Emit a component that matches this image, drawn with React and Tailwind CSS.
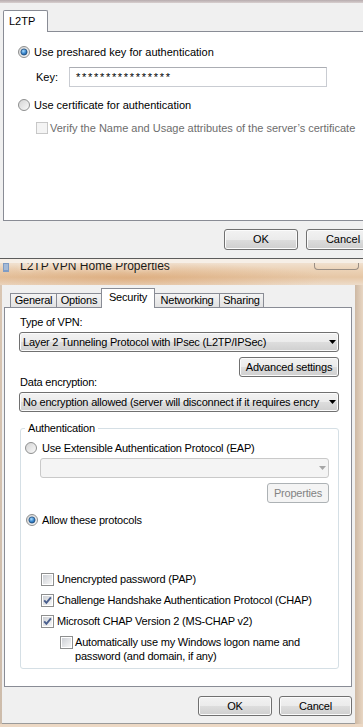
import React from "react";

const btn =
  "flex items-center justify-center shrink-0 border border-[#707070] rounded-[3px] bg-[linear-gradient(to_bottom,#f2f2f2_0%,#ebebeb_50%,#dddddd_51%,#cfcfcf_100%)] shadow-[inset_0_0_0_1px_#fbfbfb]";
const btnOff =
  "flex items-center justify-center shrink-0 border border-[#adb2b5] rounded-[3px] bg-[#f4f4f4] text-[#838383]";

function Radio({ checked }) {
  return (
    <svg width="12" height="12" viewBox="0 0 12 12" className="shrink-0">
      <defs>
        <linearGradient id="rg" x1="0" y1="0" x2="1" y2="1">
          <stop offset="0" stopColor="#d2d2d2" />
          <stop offset="1" stopColor="#fbfbfb" />
        </linearGradient>
        <radialGradient id="rd" cx="0.4" cy="0.35" r="0.75">
          <stop offset="0" stopColor="#a9dcff" />
          <stop offset="0.55" stopColor="#3a86cc" />
          <stop offset="1" stopColor="#174a86" />
        </radialGradient>
      </defs>
      <circle cx="6" cy="6" r="5.5" fill="url(#rg)" stroke="#8e8f8f" />
      {checked && (
        <circle cx="6" cy="6" r="3.1" fill="url(#rd)" stroke="#24527f" strokeWidth="0.8" />
      )}
    </svg>
  );
}

function Check({ checked, disabled, size = 13 }) {
  return (
    <svg width={size} height={size} viewBox="0 0 13 13" className="shrink-0">
      <defs>
        <linearGradient id="cg" x1="0" y1="0" x2="1" y2="1">
          <stop offset="0" stopColor="#cdd0d5" />
          <stop offset="1" stopColor="#f7f7f7" />
        </linearGradient>
      </defs>
      <rect
        x="0.5"
        y="0.5"
        width="12"
        height="12"
        fill={disabled ? "#f4f4f4" : "#ffffff"}
        stroke={disabled ? "#c4c4c4" : "#8e8f8f"}
      />
      {!disabled && <rect x="2" y="2" width="9" height="9" fill="url(#cg)" />}
      {checked && (
        <path d="M3.2 6.4 L5.4 8.9 L9.9 3.4" fill="none" stroke="#4a5f8e" strokeWidth="1.9" />
      )}
    </svg>
  );
}

function Arrow({ color = "#000" }) {
  return (
    <svg width="7" height="4" viewBox="0 0 7 4" className="shrink-0">
      <path d="M0 0 H7 L3.5 4 Z" fill={color} />
    </svg>
  );
}

function Combo({ text, disabled, className = "" }) {
  return (
    <div
      className={`h-[20px] flex items-center pl-[3px] pr-[2px] rounded-[3px] border ${
        disabled
          ? "border-[#c9c9c9] bg-[#f4f4f4]"
          : "border-[#707070] bg-[linear-gradient(to_bottom,#f2f2f2_0%,#ebebeb_50%,#dddddd_51%,#cfcfcf_100%)] shadow-[inset_0_0_0_1px_#fbfbfb]"
      } ${className}`}
    >
      <span className="flex-1 whitespace-nowrap overflow-hidden">{text}</span>
      <Arrow color={disabled ? "#a6a6a6" : "#000"} />
    </div>
  );
}

const App = () => {
  return (
    <div className="w-[363px] h-[727px] overflow-hidden bg-[#f0f0f0] flex flex-col font-['Liberation_Sans',Arial,sans-serif] text-[11px] text-black">
      {/* L2TP advanced properties (top, cropped) */}
      <div className="h-[259px] shrink-0 flex flex-col border-b border-[#5c5c5c]">
        <div className="h-[3px] bg-[linear-gradient(to_bottom,#b7acae,#d8cfcf)]" />
        <div className="pt-[7px] pl-[3px] flex">
          <div className="relative z-10 -mb-px w-[45px] h-[22px] bg-white border border-b-0 border-[#898c95] rounded-t-[2px] pl-[5px] flex items-center">
            L2TP
          </div>
        </div>
        <div className="ml-[3px] w-[420px] h-[190px] shrink-0 bg-white border border-[#898c95] flex flex-col">
          <div className="mt-[13px] ml-[14px] h-[14px] flex items-center gap-[4px]">
            <Radio checked />
            <span>Use preshared key for authentication</span>
          </div>
          <div className="mt-[8px] ml-[32px] h-[20px] flex items-center">
            <span className="w-[33px] shrink-0">Key:</span>
            <div className="w-[258px] h-[20px] shrink-0 border border-[#c9ccd2] border-t-[#abadb3] flex items-center pl-[6px] tracking-[1.7px]">
              ****************
            </div>
          </div>
          <div className="mt-[11px] ml-[14px] h-[14px] flex items-center gap-[4px]">
            <Radio />
            <span>Use certificate for authentication</span>
          </div>
          <div className="mt-[9px] ml-[32px] h-[14px] flex items-center gap-[2px]">
            <Check disabled size={12} />
            <span className="text-[#6d6d6d] whitespace-nowrap">
              Verify the Name and Usage attributes of the server’s certificate
            </span>
          </div>
        </div>
        <div className="mt-[8px] pl-[224px] flex gap-[8px]">
          <div className={`${btn} w-[74px] h-[21px]`}>OK</div>
          <div className={`${btn} w-[74px] h-[21px]`}>Cancel</div>
        </div>
      </div>

      {/* L2TP VPN Home Properties window */}
      <div className="flex-1 flex flex-col">
        <div className="h-[26px] shrink-0 flex flex-col bg-[radial-gradient(ellipse_at_35%_75%,rgba(206,128,58,0.35),transparent_60%),linear-gradient(to_bottom,#f3e9de_0%,#ecd3b8_40%,#e6c7a6_70%,#eddcca_100%)]">
          <div className="h-[4px] bg-[#f6efe7]" />
          <div className="flex-1 overflow-hidden flex items-start">
            <svg width="6" height="9" viewBox="0 0 6 9" className="ml-[3px] shrink-0">
              <rect x="0" y="0" width="6" height="9" fill="#7f9cc4" />
              <path d="M1 2 H5 M1 4 H5 M1 6 H5" stroke="#dfe8f4" strokeWidth="0.8" />
            </svg>
            <div className="ml-[11px] -mt-[4px] leading-[14px] text-[12px] text-[#1a1a1a] whitespace-nowrap [text-shadow:0_0_5px_rgba(255,245,235,0.9)]">
              L2TP VPN Home Properties
            </div>
            <div className="ml-auto mr-[4px] w-[45px] h-[7px] border border-t-0 border-[#9a8e84] rounded-b-[4px]" />
          </div>
        </div>

        <div className="flex-1 flex">
          <div className="w-[2px] bg-[linear-gradient(to_bottom,#d9c6b3,#cdbcab)]" />
          <div className="flex-1 bg-[#f0f0f0] flex flex-col border-b border-[#9a9a9a] tracking-[-0.2px]">
            {/* tabs */}
            <div className="mt-[3px] h-[19px] pl-[8px] flex items-end">
              <div className="w-[47px] h-[14px] border border-b-0 border-[#898c95] bg-[linear-gradient(to_bottom,#f4f4f4,#e2e2e2)] flex items-center justify-center">
                General
              </div>
              <div className="-ml-px w-[46px] h-[14px] border border-b-0 border-[#898c95] bg-[linear-gradient(to_bottom,#f4f4f4,#e2e2e2)] flex items-center justify-center">
                Options
              </div>
              <div className="relative z-10 -ml-px -mb-px w-[54px] h-[20px] border border-b-0 border-[#898c95] bg-white flex items-center justify-center pb-[2px]">
                Security
              </div>
              <div className="-ml-px w-[66px] h-[14px] border border-b-0 border-[#898c95] bg-[linear-gradient(to_bottom,#f4f4f4,#e2e2e2)] flex items-center justify-center">
                Networking
              </div>
              <div className="-ml-px w-[45px] h-[14px] border border-b-0 border-[#898c95] bg-[linear-gradient(to_bottom,#f4f4f4,#e2e2e2)] flex items-center justify-center">
                Sharing
              </div>
            </div>

            {/* panel */}
            <div className="ml-[2px] w-[348px] h-[380px] shrink-0 bg-white border border-[#898c95] flex flex-col pl-[14px] pr-[12px]">
              <div className="mt-[6px] h-[16px] leading-[16px] pl-[1px]">Type of VPN:</div>
              <Combo className="mt-[2px]" text="Layer 2 Tunneling Protocol with IPsec (L2TP/IPSec)" />
              <div className={`${btn} mt-[5px] self-end w-[100px] h-[20px]`}>Advanced settings</div>
              <div className="-mt-[2px] h-[14px] leading-[14px] pl-[1px]">Data encryption:</div>
              <Combo
                className="mt-[3px]"
                text="No encryption allowed (server will disconnect if it requires encry"
              />

              <fieldset className="mt-[9px] ml-[1px] border border-[#d5dfe5] rounded-[3px] pb-[5px]">
                <legend className="ml-[4px] px-[3px] leading-[14px]">Authentication</legend>
                <div className="flex flex-col">
                  <div className="mt-[6px] ml-[4px] h-[14px] flex items-center gap-[5px]">
                    <Radio />
                    <span>Use Extensible Authentication Protocol (EAP)</span>
                  </div>
                  <Combo disabled className="mt-[3px] ml-[19px] mr-[9px]" text="" />
                  <div className={`${btnOff} mt-[5px] self-end mr-[9px] w-[62px] h-[20px]`}>
                    Properties
                  </div>
                  <div className="mt-[10px] ml-[5px] h-[14px] flex items-center gap-[4px]">
                    <Radio checked />
                    <span>Allow these protocols</span>
                  </div>
                  <div className="mt-[45px] ml-[20px] h-[14px] flex items-center gap-[3px]">
                    <Check />
                    <span>Unencrypted password (PAP)</span>
                  </div>
                  <div className="mt-[7px] ml-[20px] h-[14px] flex items-center gap-[3px]">
                    <Check checked />
                    <span>Challenge Handshake Authentication Protocol (CHAP)</span>
                  </div>
                  <div className="mt-[7px] ml-[20px] h-[14px] flex items-center gap-[3px]">
                    <Check checked />
                    <span>Microsoft CHAP Version 2 (MS-CHAP v2)</span>
                  </div>
                  <div className="mt-[7px] ml-[39px] flex items-start gap-[2px]">
                    <div className="mt-[1px] flex">
                      <Check />
                    </div>
                    <span className="leading-[14px]">
                      Automatically use my Windows logon name and
                      <br />
                      password (and domain, if any)
                    </span>
                  </div>
                </div>
              </fieldset>
            </div>

            <div className="mt-[9px] pr-[3px] flex justify-end gap-[7px]">
              <div className={`${btn} w-[74px] h-[20px]`}>OK</div>
              <div className={`${btn} w-[73px] h-[20px]`}>Cancel</div>
            </div>
          </div>
          <div className="w-[8px] bg-[linear-gradient(to_right,#cdb8a3,#e8d6c3)]" />
        </div>
        <div className="h-[3px] shrink-0 bg-[#ecd8c4]" />
      </div>
    </div>
  );
};

export default App;
